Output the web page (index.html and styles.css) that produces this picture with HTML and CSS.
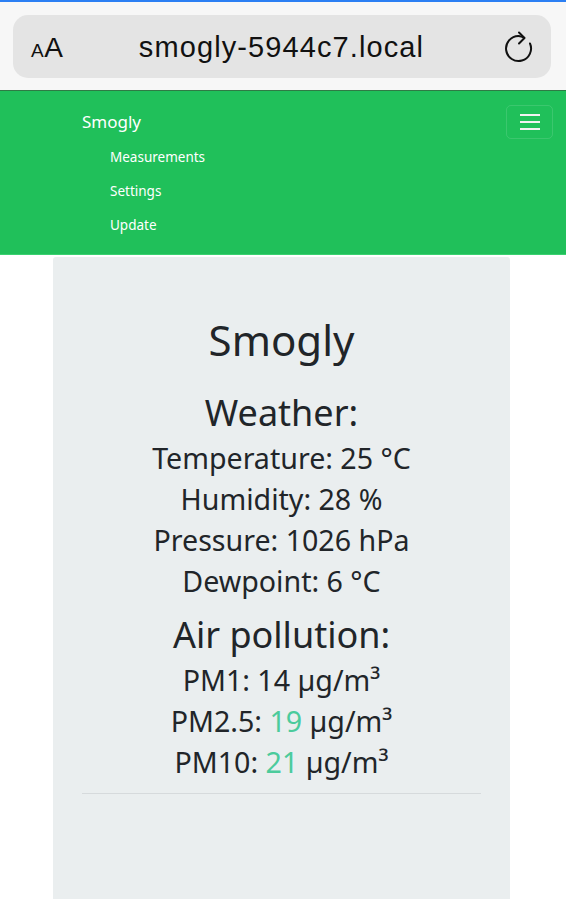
FILE: index.html
```html
<!DOCTYPE html>
<html lang="en">
<head>
<meta charset="utf-8">
<title>Smogly</title>
<link rel="stylesheet" href="styles.css">
</head>
<body>
<div class="chrome">
  <div class="urlbar">
    <span class="aa"><span class="a-small">A</span><span class="a-big">A</span></span>
    <span class="url">smogly-5944c7.local</span>
    <svg class="reload" width="30" height="34" viewBox="0 0 30 34" fill="none" stroke="#111" stroke-width="2" stroke-linecap="round" stroke-linejoin="round">
      <path d="M14.5 6 A12.5 12.5 0 1 0 26 13.5"/>
      <path d="M15 2.5 L20.5 8 L15 13.5"/>
      <path d="M14.5 6 Q17.5 6.3 20.2 7.8"/>
    </svg>
  </div>
</div>
<nav class="navbar">
  <div class="nav-top">
    <a class="brand" href="#">Smogly</a>
    <button class="toggler" aria-label="menu">
      <span class="bar"></span><span class="bar"></span><span class="bar"></span>
    </button>
  </div>
  <ul class="nav-list">
    <li><a href="#">Measurements</a></li>
    <li><a href="#">Settings</a></li>
    <li><a href="#">Update</a></li>
  </ul>
</nav>
<main class="card">
  <h1 class="title">Smogly</h1>
  <h2 class="section">Weather:</h2>
  <p class="row">Temperature: 25 °C</p>
  <p class="row">Humidity: 28 %</p>
  <p class="row">Pressure: 1026 hPa</p>
  <p class="row">Dewpoint: 6 °C</p>
  <h2 class="section section-air">Air pollution:</h2>
  <p class="row">PM1: 14 µg/m³</p>
  <p class="row">PM2.5: <span class="good">19</span> µg/m³</p>
  <p class="row">PM10: <span class="good">21</span> µg/m³</p>
  <hr class="divider">
</main>
</body>
</html>
```
FILE: styles.css
```css
* { box-sizing: border-box; }
html, body { margin: 0; padding: 0; }
body {
  width: 566px;
  height: 899px;
  overflow: hidden;
  background: #ffffff;
  font-family: "Noto Sans", "Open Sans", sans-serif;
  color: #212529;
}
.chrome {
  height: 91px;
  background: #f7f7f7;
  border-top: 2px solid #2b7ff3;
  border-bottom: 1px solid #2f7a45;
  padding: 13px 15px 0 13px;
}
.urlbar {
  height: 63px;
  background: #e4e4e4;
  border-radius: 15px;
  display: flex;
  align-items: center;
  padding: 0 17px 0 18px;
  font-family: "Liberation Sans", Arial, sans-serif;
  color: #111;
}
.aa {
  width: 70px;
  display: flex;
  align-items: baseline;
  margin-top: 2px;
}
.a-small { font-size: 19px; letter-spacing: 0.5px; }
.a-big { font-size: 28px; }
.url {
  flex: 1;
  text-align: center;
  font-size: 29px;
  letter-spacing: 1.1px;
  padding-right: 42px;
  margin-top: 1px;
}
.reload { flex: none; margin-top: 0; }
.navbar {
  background: #20c05a;
  height: 164px;
  border-bottom: 1px solid #3ad170;
}
.nav-top {
  display: flex;
  justify-content: space-between;
  align-items: center;
  padding: 14px 13px 0 82px;
}
.brand {
  color: #fff;
  text-decoration: none;
  font-size: 17px;
  line-height: 26px;
}
.toggler {
  width: 47px;
  height: 34px;
  background: transparent;
  border: 1px solid rgba(255,255,255,0.12);
  border-radius: 5px;
  display: flex;
  flex-direction: column;
  align-items: center;
  justify-content: center;
  gap: 5px;
  padding: 0;
}
.bar { display: block; width: 20px; height: 2px; background: #f2f2f2; }
.nav-list {
  list-style: none;
  margin: 0;
  padding: 1px 0 0 110px;
}
.nav-list li { height: 34px; display: flex; align-items: center; }
.nav-list a {
  color: #fff;
  text-decoration: none;
  font-size: 13.5px;
}
.card {
  margin: 2px 0 0 53px;
  width: 457px;
  height: 660px;
  background: #eaeeef;
  border-radius: 3px;
  padding: 58px 29px 0 29px;
  text-align: center;
}
.title {
  margin: 0;
  font-weight: 400;
  font-size: 42px;
  line-height: 50px;
}
.section {
  margin: 23px 0 0;
  font-weight: 400;
  font-size: 36px;
  line-height: 49px;
}
.section-air { margin-top: 9px; }
.row {
  margin: 0;
  font-size: 28.6px;
  line-height: 41px;
}
.good { color: #4ccb9c; }
.divider {
  margin: 11px 0 0;
  border: 0;
  border-top: 1px solid #d6dadc;
}
```
